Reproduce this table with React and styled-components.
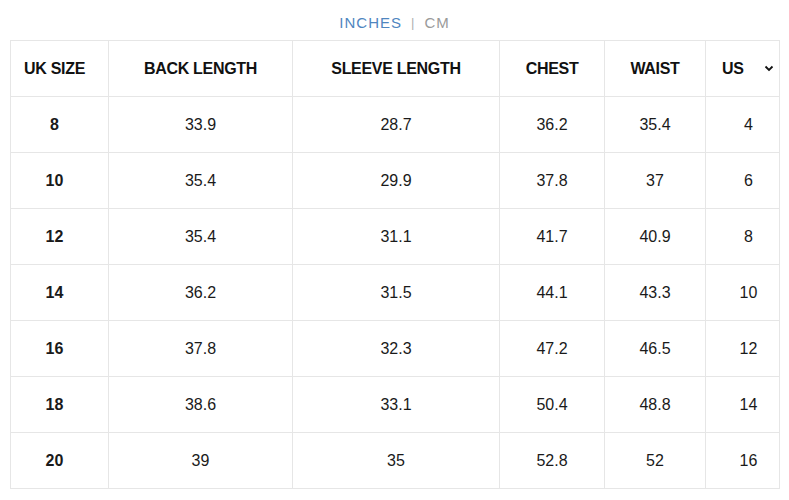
import React from 'react';
import styled, { createGlobalStyle } from 'styled-components';

const GlobalStyle = createGlobalStyle`
  body {
    margin: 0;
    background: #ffffff;
    font-family: "Liberation Sans", Arial, sans-serif;
    color: #111;
  }
`;

const Page = styled.div`
  width: 789px;
  padding: 13px 10px 0 10px;
  box-sizing: border-box;
`;

const UnitToggle = styled.div`
  display: flex;
  justify-content: center;
  align-items: center;
  gap: 9px;
  height: 19px;
  margin-bottom: 8px;
  font-size: 15px;
  letter-spacing: 1px;
`;

const Unit = styled.span`
  color: ${p => (p.active ? '#4f86bf' : '#9a9a9a')};
`;

const Divider = styled.span`
  color: #b0b0b0;
  font-size: 13px;
`;

const Table = styled.table`
  width: 769px;
  border-collapse: collapse;
  table-layout: fixed;
  border: 1px solid #e6e6e6;
`;

const HeadCell = styled.th`
  height: 55px;
  border: 1px solid #e6e6e6;
  font-size: 16px;
  font-weight: 700;
  text-align: center;
  color: #111;
  padding: 0;
  padding-right: ${p => (p.first ? '10px' : '0')};
  letter-spacing: -0.3px;
`;

const SelectHead = styled.div`
  display: flex;
  align-items: center;
  justify-content: space-between;
  padding: 0 5px 0 16px;
`;

const Cell = styled.td`
  height: 55px;
  border: 1px solid #e6e6e6;
  font-size: 16px;
  font-weight: ${p => (p.bold ? 700 : 400)};
  text-align: center;
  color: #1a1a1a;
  padding: 0;
  padding-left: ${p => (p.shift ? '12px' : '0')};
  padding-right: ${p => (p.bold ? '10px' : '0')};
`;

const Chevron = () => (
  <svg width="10" height="7" viewBox="0 0 10 7">
    <path d="M1.5 1.5 L5 5 L8.5 1.5" fill="none" stroke="#111" strokeWidth="1.8" />
  </svg>
);

const widths = [98, 184, 207, 105, 101, 74];
const headers = ['UK SIZE', 'BACK LENGTH', 'SLEEVE LENGTH', 'CHEST', 'WAIST'];

const rows = [
  ['8', '33.9', '28.7', '36.2', '35.4', '4'],
  ['10', '35.4', '29.9', '37.8', '37', '6'],
  ['12', '35.4', '31.1', '41.7', '40.9', '8'],
  ['14', '36.2', '31.5', '44.1', '43.3', '10'],
  ['16', '37.8', '32.3', '47.2', '46.5', '12'],
  ['18', '38.6', '33.1', '50.4', '48.8', '14'],
  ['20', '39', '35', '52.8', '52', '16'],
];

export default function App() {
  return (
    <Page>
      <GlobalStyle />
      <UnitToggle>
        <Unit active>INCHES</Unit>
        <Divider>|</Divider>
        <Unit>CM</Unit>
      </UnitToggle>
      <Table>
        <colgroup>
          {widths.map((w, i) => (
            <col key={i} style={{ width: w }} />
          ))}
        </colgroup>
        <thead>
          <tr>
            {headers.map((h, i) => (
              <HeadCell key={h} first={i === 0}>{h}</HeadCell>
            ))}
            <HeadCell>
              <SelectHead>
                <span>US</span>
                <Chevron />
              </SelectHead>
            </HeadCell>
          </tr>
        </thead>
        <tbody>
          {rows.map(r => (
            <tr key={r[0]}>
              {r.map((v, i) => (
                <Cell key={i} bold={i === 0} shift={i === 5}>
                  {v}
                </Cell>
              ))}
            </tr>
          ))}
        </tbody>
      </Table>
    </Page>
  );
}
